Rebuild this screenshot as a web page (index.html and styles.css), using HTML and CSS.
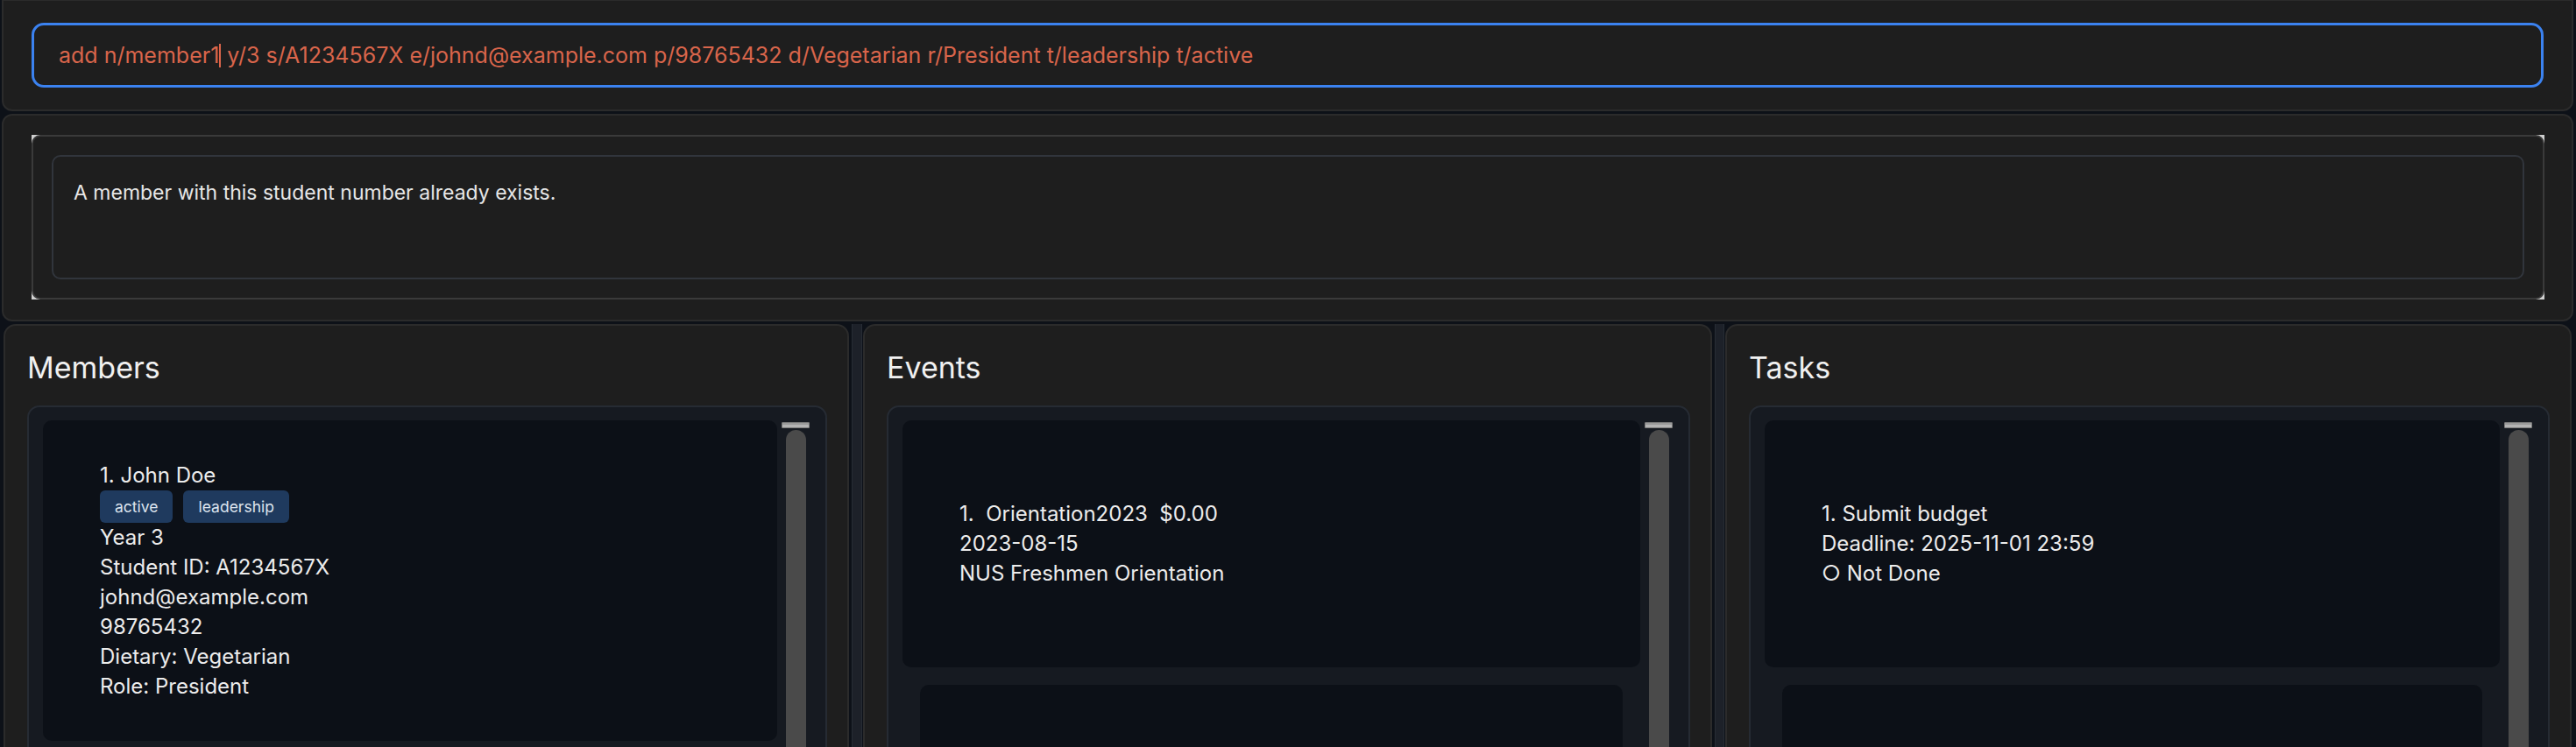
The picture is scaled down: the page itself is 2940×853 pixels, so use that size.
FILE: index.html
```html
<!DOCTYPE html>
<html lang="en">
<head>
    <meta charset="UTF-8">
    <title>Club Manager</title>
    <link rel="stylesheet" href="styles.css">
</head>
<body>
    <div class="app">
        <div class="command-panel">
            <div class="command-box">add n/member1<span class="caret"></span> y/3 s/A1234567X e/johnd@example.com p/98765432 d/Vegetarian r/President t/leadership t/active</div>
        </div>

        <div class="result-panel">
            <div class="result-box">
                <div class="result-frame">
                    <div class="result-text">A member with this student number already exists.</div>
                </div>
            </div>
        </div>

        <div class="columns">
            <div class="panel">
                <div class="panel-title">Members</div>
                <div class="list">
                    <div class="list-items">
                        <div class="card member-card">
                            <div class="line">1. John Doe</div>
                            <div class="tags">
                                <span class="tag">active</span>
                                <span class="tag">leadership</span>
                            </div>
                            <div class="line">Year 3</div>
                            <div class="line">Student ID: A1234567X</div>
                            <div class="line">johnd@example.com</div>
                            <div class="line">98765432</div>
                            <div class="line">Dietary: Vegetarian</div>
                            <div class="line">Role: President</div>
                        </div>
                    </div>
                    <div class="scrollbar">
                        <div class="scroll-btn"></div>
                        <div class="scroll-thumb"></div>
                    </div>
                </div>
            </div>

            <div class="divider"></div>

            <div class="panel">
                <div class="panel-title">Events</div>
                <div class="list">
                    <div class="list-items">
                        <div class="card short-card">
                            <div class="line pre">1.  Orientation2023  $0.00</div>
                            <div class="line">2023-08-15</div>
                            <div class="line">NUS Freshmen Orientation</div>
                        </div>
                        <div class="card next-card"></div>
                    </div>
                    <div class="scrollbar">
                        <div class="scroll-btn"></div>
                        <div class="scroll-thumb"></div>
                    </div>
                </div>
            </div>

            <div class="divider"></div>

            <div class="panel">
                <div class="panel-title">Tasks</div>
                <div class="list">
                    <div class="list-items">
                        <div class="card short-card">
                            <div class="line">1. Submit budget</div>
                            <div class="line">Deadline: 2025-11-01 23:59</div>
                            <div class="line">○ Not Done</div>
                        </div>
                        <div class="card next-card"></div>
                    </div>
                    <div class="scrollbar">
                        <div class="scroll-btn"></div>
                        <div class="scroll-thumb"></div>
                    </div>
                </div>
            </div>
        </div>
    </div>
</body>
</html>
```

FILE: styles.css
```css
body, html {
    margin: 0;
    height: 100%;
    overflow: hidden;
    background: #0d1118;
    font-family: Inter, "Noto Sans", sans-serif;
    color: #e8e8e8;
}
.app {
    display: flex;
    flex-direction: column;
    gap: 3px;
    padding-left: 2px;
    width: 2935px;
}

/* command input */
.command-panel {
    background: #1e1e1e;
    border: 2px solid #2b2b2b;
    border-top-width: 1px;
    border-radius: 0 0 12px 12px;
    padding: 25px 32px 25px 32px;
}
.command-box {
    height: 74px;
    box-sizing: border-box;
    border: 3px solid #3b82f0;
    border-radius: 14px;
    padding: 0 28px;
    display: flex;
    align-items: center;
    font-size: 25px;
    color: #d9654b;
    white-space: pre;
}
.caret {
    display: inline-block;
    width: 2px;
    height: 27px;
    background: #d9654b;
}

/* result display */
.result-panel {
    background: #1e1e1e;
    border: 2px solid #2b2b2b;
    border-radius: 12px;
    padding: 22px 31px 23px 32px;
}
.result-box {
    background: #d0d0d0;
}
.result-frame {
    background: #1e1e1e;
    border: 2px solid #3a3a3a;
    border-radius: 10px;
    padding: 21px;
}
.result-text {
    height: 142px;
    box-sizing: border-box;
    border: 2px solid #31353c;
    border-radius: 10px;
    padding: 27px 23px;
    font-size: 23px;
    color: #e6e6e6;
}

/* list panels */
.columns {
    display: grid;
    grid-template-columns: 965px 16px 969px 15px 966px;
    height: 483px;
    overflow: hidden;
    margin-left: 2px;
}
.panel {
    background: #1e1e1e;
    border: 2px solid #2b2b2b;
    border-radius: 14px 14px 0 0;
    padding: 27px 23px 0 25px;
    height: 600px;
}
.panel-title {
    font-size: 34px;
    color: #f0f0f0;
    margin-bottom: 23px;
}
.divider {
    margin: 0 1px 0 3px;
    background: #1d2129;
    border-left: 1px solid #272c34;
    border-right: 1px solid #272c34;
}
.list {
    display: flex;
    background: #161a21;
    border: 2px solid #262b33;
    border-radius: 14px;
    height: 600px;
}
.list-items {
    flex: 1;
    padding: 15px 0 0 16px;
    display: flex;
    flex-direction: column;
    gap: 20px;
}
.card {
    background: #0c1017;
    border-radius: 10px;
    padding: 0 65px;
    font-size: 24px;
    color: #ececec;
}
.line {
    line-height: 34px;
}
.pre {
    white-space: pre;
}
.member-card {
    padding-top: 46px;
    padding-bottom: 45px;
}
.short-card {
    padding-top: 90px;
    padding-bottom: 90px;
}
.next-card {
    margin: 0 20px;
    height: 200px;
}
.tags {
    display: flex;
    gap: 12px;
}
.tag {
    background: #1f3a5e;
    color: #dde4ee;
    border-radius: 6px;
    height: 37px;
    padding: 0 17px;
    font-size: 17.5px;
    display: flex;
    align-items: center;
}

/* scrollbar */
.scrollbar {
    width: 32px;
    margin: 17px 18px 0 5px;
    display: flex;
    flex-direction: column;
    align-items: center;
}
.scroll-btn {
    width: 30px;
    height: 5px;
    background: #b4b4b4;
    border: 1px solid #7a7a7a;
    border-radius: 1px;
    box-shadow: inset 0 2px 0 #9a9a9a;
}
.scroll-thumb {
    margin-top: 2px;
    width: 23px;
    flex: 1;
    background: #4a4a4a;
    border-radius: 12px 12px 0 0;
}
```
